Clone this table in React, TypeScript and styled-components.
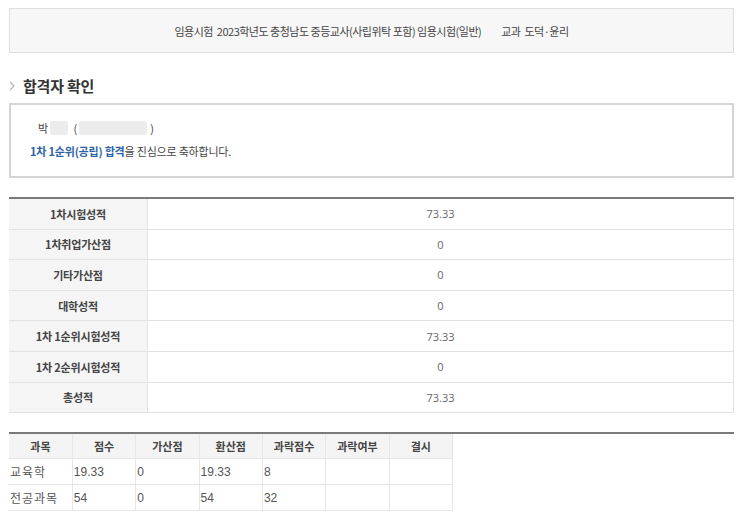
import React from 'react';
import styled, { createGlobalStyle } from 'styled-components';

const scoreRows = [
  { label: '1차시험성적', value: '73.33' },
  { label: '1차취업가산점', value: '0' },
  { label: '기타가산점', value: '0' },
  { label: '대학성적', value: '0' },
  { label: '1차 1순위시험성적', value: '73.33' },
  { label: '1차 2순위시험성적', value: '0' },
  { label: '총성적', value: '73.33' },
];

const subjectHeads = ['과목', '점수', '가산점', '환산점', '과락점수', '과락여부', '결시'];

const subjects = [
  ['교육학', '19.33', '0', '19.33', '8', '', ''],
  ['전공과목', '54', '0', '54', '32', '', ''],
];

const App: React.FC = () => {
  return (
    <Page>
      <GlobalStyle />
      <ExamBar>
        <span>임용시험&nbsp; 2023학년도 충청남도 중등교사(사립위탁 포함) 임용시험(일반)</span>
        <span>교과&nbsp; 도덕·윤리</span>
      </ExamBar>

      <SectionTitle>
        <Chevron viewBox="0 0 6 10" width="6" height="10">
          <path d="M1 1 L5 5 L1 9" fill="none" stroke="#b5b5b5" strokeWidth="1.2" />
        </Chevron>
        합격자 확인
      </SectionTitle>

      <ResultBox>
        <NameLine>
          박<Blur $w={18} /> (<Blur $w={68} />)
        </NameLine>
        <Message>
          <Strong>1차 1순위(공립) 합격</Strong>을 진심으로 축하합니다.
        </Message>
      </ResultBox>

      <ScoreTable>
        <tbody>
          {scoreRows.map((r) => (
            <tr key={r.label}>
              <ScoreHead>{r.label}</ScoreHead>
              <ScoreCell>{r.value}</ScoreCell>
            </tr>
          ))}
        </tbody>
      </ScoreTable>

      <SubjectWrap>
        <SubjectTable>
          <thead>
            <tr>
              {subjectHeads.map((h) => (
                <SubjectHead key={h}>{h}</SubjectHead>
              ))}
            </tr>
          </thead>
          <tbody>
            {subjects.map((row) => (
              <tr key={row[0]}>
                {row.map((c, i) => (
                  <SubjectCell key={i} $first={i === 0}>{c}</SubjectCell>
                ))}
              </tr>
            ))}
          </tbody>
        </SubjectTable>
      </SubjectWrap>
    </Page>
  );
};

export default App;

const GlobalStyle = createGlobalStyle`
  body {
    margin: 0;
    background: #fff;
    font-family: "Noto Sans CJK KR", "Noto Sans", sans-serif;
    color: #333;
  }
`;

const Page = styled.div`
  width: 725px;
  padding: 8px 9px 0 9px;
`;

const ExamBar = styled.div`
  display: flex;
  justify-content: center;
  align-items: center;
  gap: 20px;
  height: 43px;
  border: 1px solid #dedede;
  background: #f7f7f7;
  font-size: 11px;
  color: #444;
  letter-spacing: -0.5px;
`;

const SectionTitle = styled.h2`
  display: flex;
  align-items: center;
  gap: 8px;
  margin: 0;
  padding: 19px 0 0 0;
  height: 26px;
  font-size: 15px;
  font-weight: 700;
  color: #333;
  letter-spacing: -0.2px;
`;

const Chevron = styled.svg`
  flex: none;
  margin-top: 1px;
`;

const ResultBox = styled.div`
  margin-top: 5px;
  height: 75px;
  border: 2px solid #d4d4d4;
  padding: 14px 0 0 19px;
  box-sizing: border-box;
  font-size: 11px;
  color: #444;
`;

const NameLine = styled.div`
  display: flex;
  align-items: center;
  padding-left: 8px;
  height: 17px;
  white-space: pre;
`;

const Blur = styled.span<{ $w: number }>`
  display: inline-block;
  width: ${(p) => p.$w}px;
  height: 14px;
  margin: 0 3px 0 2px;
  background: #ececec;
  border-radius: 2px;
`;

const Message = styled.div`
  margin-top: 7px;
  letter-spacing: -0.2px;
`;

const Strong = styled.b`
  color: #2c64a6;
  font-weight: 700;
`;

const ScoreTable = styled.table`
  margin-top: 19px;
  width: 725px;
  border-collapse: collapse;
  border-top: 2px solid #7a7a7a;
  border-right: 1px solid #e2e2e2;
  font-size: 11px;

  tr {
    border-bottom: 1px solid #e2e2e2;
  }
`;

const ScoreHead = styled.th`
  width: 138px;
  height: 29.6px;
  padding: 0;
  background: #f5f5f5;
  border-right: 1px solid #e2e2e2;
  font-weight: 700;
  color: #444;
  letter-spacing: -0.2px;
`;

const ScoreCell = styled.td`
  padding: 0;
  text-align: center;
  color: #666;
  font-family: "Open Sans", "Noto Sans CJK KR", sans-serif;
`;

const SubjectWrap = styled.div`
  margin-top: 19px;
  border-top: 2px solid #7a7a7a;
`;

const SubjectTable = styled.table`
  width: 444px;
  border-collapse: collapse;
  table-layout: fixed;
  font-size: 12px;
`;

const SubjectHead = styled.th`
  height: 24px;
  padding: 0;
  background: #f4f4f4;
  border-right: 1px solid #e6e6e6;
  border-bottom: 1px solid #e6e6e6;
  font-size: 11px;
  font-weight: 700;
  color: #444;
`;

const SubjectCell = styled.td<{ $first: boolean }>`
  height: 25px;
  padding: 0 0 0 1px;
  border-right: 1px solid #e6e6e6;
  border-bottom: 1px solid #e6e6e6;
  color: #555;
  font-family: ${(p) => (p.$first ? '"Noto Sans CJK KR", sans-serif' : '"Liberation Sans", Arial, sans-serif')};
  letter-spacing: ${(p) => (p.$first ? '1px' : '0')};
`;
